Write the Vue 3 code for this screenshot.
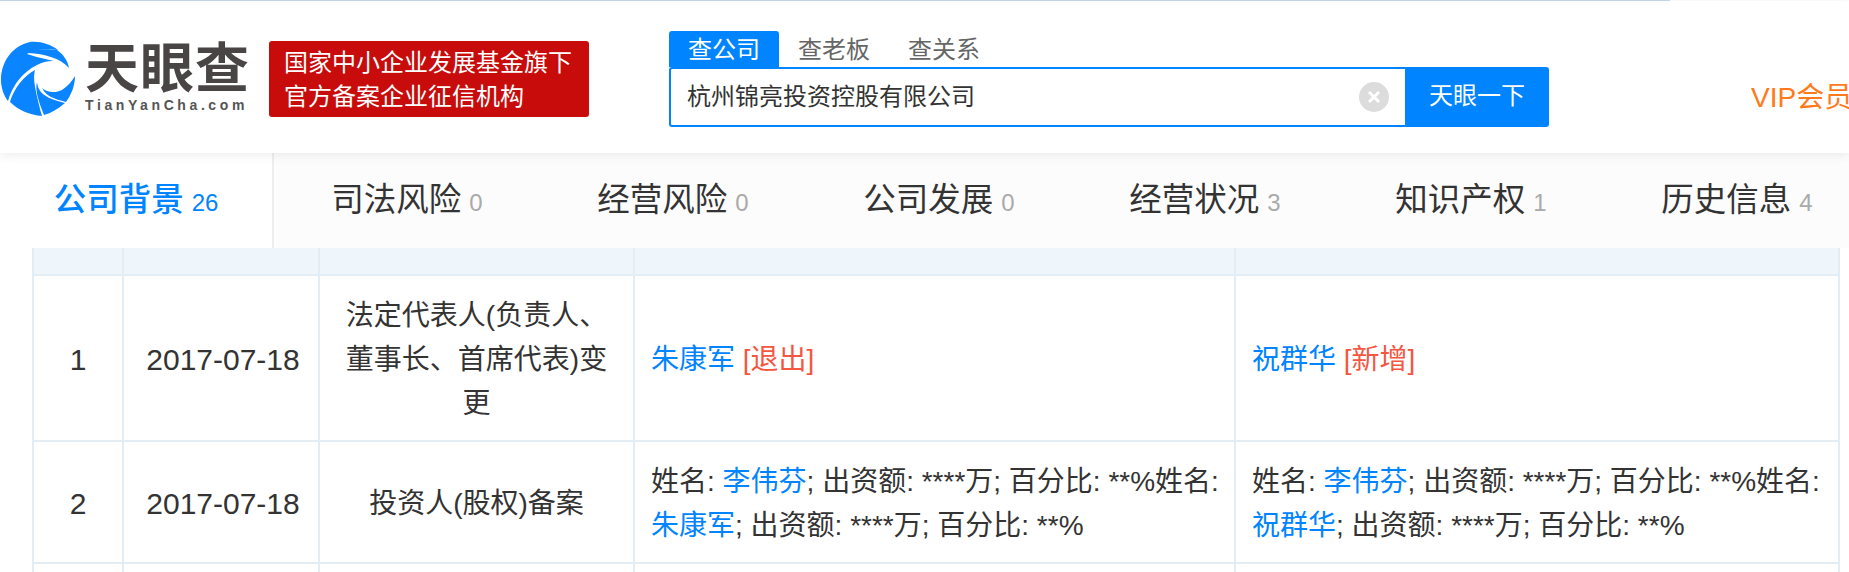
<template>
  <div class="page">
    <div class="topline"></div>
    <header class="header">
      <div class="logo">
        <svg class="logo-mark" viewBox="0 0 80 82" width="80" height="82">
          <path fill="#0a84ff" d="M30 4C12 8 1 24 1 42c0 8 3 16 7 21 5-17 15-29 29-36 5-2.500 10-4 16-4-5-2-15-3-26-7 6-4 18-6 31-4-8-6-18-9-28-8z" />
          <path fill="#0a84ff" d="M57 12c-17-2-25 0-29 3 17 1 32 5 41 15-1-7-6-14-12-18z" />
          <path fill="#0a84ff" d="M35 32c-2 8-1 16 7 46-12-1-24-6-32-14 4-14 14-26 25-32z" />
          <path fill="#0a84ff" d="M37 44c1 10 7 16 28 21-7 6-14 10-21 12-6-15-9-25-7-33z" />
          <path fill="#0a84ff" d="M42 50c5 5 14 5 20 2 6-4 10-9 13-14 0 10-4 19-9 26-12-3-20-6-24-14z" />
        </svg>
        <div class="logo-text">
          <div class="logo-name">天眼查</div>
          <div class="logo-url">TianYanCha.com</div>
        </div>
      </div>
      <div class="badge">
        <div>国家中小企业发展基金旗下</div>
        <div>官方备案企业征信机构</div>
      </div>
      <div class="search">
        <div class="search-tabs">
          <span v-for="(t, i) in searchTabs" :key="t" class="search-tab" :class="{ on: i === 0 }">{{ t }}</span>
        </div>
        <div class="search-row">
          <div class="search-input">
            <span class="search-value">杭州锦亮投资控股有限公司</span>
            <svg class="clear" viewBox="0 0 30 30" width="30" height="30">
              <circle cx="15" cy="15" r="15" fill="#dcdcdc" />
              <path d="M10 10l10 10M20 10L10 20" stroke="#fff" stroke-width="3" fill="none" />
            </svg>
          </div>
          <div class="search-btn">天眼一下</div>
        </div>
      </div>
      <div class="vip">VIP会员</div>
    </header>

    <nav class="nav">
      <div v-for="(n, i) in navs" :key="n.name" class="nav-item" :class="{ active: i === 0 }">
        <span class="nav-name">{{ n.name }}</span><span class="nav-count">{{ n.count }}</span>
      </div>
    </nav>

    <div class="table-wrap">
      <table class="table">
        <colgroup>
          <col style="width: 90px" />
          <col style="width: 196px" />
          <col style="width: 315px" />
          <col style="width: 601px" />
          <col style="width: 604px" />
        </colgroup>
        <thead>
          <tr class="head"><th></th><th></th><th></th><th></th><th></th></tr>
        </thead>
        <tbody>
          <tr>
            <td class="c num">1</td>
            <td class="c num date">2017-07-18</td>
            <td class="c">法定代表人(负责人、董事长、首席代表)变更</td>
            <td><a>朱康军</a> <em>[退出]</em></td>
            <td><a>祝群华</a> <em>[新增]</em></td>
          </tr>
          <tr>
            <td class="c num">2</td>
            <td class="c num date">2017-07-18</td>
            <td class="c">投资人(股权)备案</td>
            <td>姓名: <a>李伟芬</a>; 出资额: ****万; 百分比: **%姓名: <a>朱康军</a>; 出资额: ****万; 百分比: **%</td>
            <td>姓名: <a>李伟芬</a>; 出资额: ****万; 百分比: **%姓名: <a>祝群华</a>; 出资额: ****万; 百分比: **%</td>
          </tr>
          <tr class="blank"><td></td><td></td><td></td><td></td><td></td></tr>
        </tbody>
      </table>
    </div>
  </div>
</template>

<script setup>
const searchTabs = ['查公司', '查老板', '查关系']

const navs = [
  { name: '公司背景', count: 26 },
  { name: '司法风险', count: 0 },
  { name: '经营风险', count: 0 },
  { name: '公司发展', count: 0 },
  { name: '经营状况', count: 3 },
  { name: '知识产权', count: 1 },
  { name: '历史信息', count: 4 },
]
</script>

<style>
html,
body {
  margin: 0;
  background: #fff;
  overflow: hidden;
}
</style>

<style scoped>
.page {
  width: 1849px;
  height: 572px;
  overflow: hidden;
  font-family: "Liberation Sans", "Noto Sans CJK SC", sans-serif;
  color: #333;
}

.topline {
  width: 1670px;
  height: 1px;
  background: #c5d9ee;
}

.header {
  position: relative;
  z-index: 2;
  height: 152px;
  display: flex;
  align-items: flex-start;
  background: #fff;
  box-shadow: 0 2px 10px rgba(0, 0, 0, 0.08);
  overflow: hidden;
}

.logo {
  display: flex;
  flex: none;
  width: 269px;
  margin-top: 37px;
}

.logo-mark {
  display: block;
  flex: none;
}

.logo-text {
  margin: 3px 0 0 5px;
}

.logo-name {
  font-size: 54px;
  line-height: 56px;
  font-weight: 700;
  letter-spacing: 1px;
  color: #4a4545;
}

.logo-url {
  font-size: 14px;
  line-height: 16px;
  font-weight: 700;
  letter-spacing: 3.6px;
  white-space: nowrap;
  color: #555;
}

.badge {
  width: 320px;
  height: 76px;
  margin-top: 40px;
  padding: 5px 0 0 15px;
  box-sizing: border-box;
  background: #c80c0c;
  border-radius: 3px;
  color: #fff;
  font-size: 24px;
  line-height: 34px;
}

.search {
  width: 880px;
  margin-top: 30px;
  margin-left: 80px;
}

.search-tabs {
  display: flex;
  height: 36px;
}

.search-tab {
  width: 110px;
  text-align: center;
  font-size: 24px;
  line-height: 38px;
  color: #666;
}

.search-tab.on {
  background: #0084ff;
  color: #fff;
  border-radius: 3px 3px 0 0;
}

.search-row {
  display: flex;
  height: 60px;
}

.search-input {
  width: 736px;
  display: flex;
  align-items: center;
  justify-content: space-between;
  box-sizing: border-box;
  padding: 0 16px 0 16px;
  border: 2px solid #0084ff;
  border-right: 0;
  border-radius: 3px 0 0 3px;
}

.search-value {
  font-size: 24px;
  line-height: 34px;
  margin-top: -1px;
}

.search-btn {
  width: 144px;
  background: #0084ff;
  color: #fff;
  border-radius: 0 3px 3px 0;
  text-align: center;
  font-size: 24px;
  line-height: 58px;
}

.vip {
  position: absolute;
  left: 1751px;
  top: 79px;
  white-space: nowrap;
  font-size: 28px;
  line-height: 36px;
  color: #ff7a1a;
}

.nav {
  display: flex;
  height: 95px;
  background: #fcfcfc;
}

.nav-item {
  flex: none;
  width: 266px;
  text-align: center;
  font-size: 32.5px;
  line-height: 95px;
  color: #333;
  white-space: nowrap;
}

.nav-item.active {
  width: 274px;
  box-sizing: border-box;
  background: #fff;
  border-right: 2px solid #eee;
  color: #0084ff;
  font-weight: 500;
}

.nav-count {
  margin-left: 8px;
  font-size: 24px;
  font-weight: 400;
  color: #aaa;
}

.active .nav-count {
  color: #0084ff;
}

.table-wrap {
  padding-left: 32px;
}

.table {
  width: 1806px;
  table-layout: fixed;
  border-collapse: collapse;
  font-size: 28px;
  line-height: 44px;
  color: #333;
}

.table th,
.table td {
  border: 2px solid #e3edf6;
  padding: 18px 10px 14px 16px;
  font-weight: 400;
  word-break: break-all;
}

.table .head th {
  height: 26px;
  padding: 0;
  border-top: 0;
  background: #eef5fb;
}

.table td.c {
  text-align: center;
  padding-right: 16px;
}

.table td.num {
  font-size: 30px;
  padding-left: 4px;
  padding-right: 4px;
}

.table td.date {
  padding-left: 8px;
}

.table .blank td {
  height: 100px;
}

.table a {
  color: #0084ff;
}

.table em {
  font-style: normal;
  color: #f4563f;
}
</style>
